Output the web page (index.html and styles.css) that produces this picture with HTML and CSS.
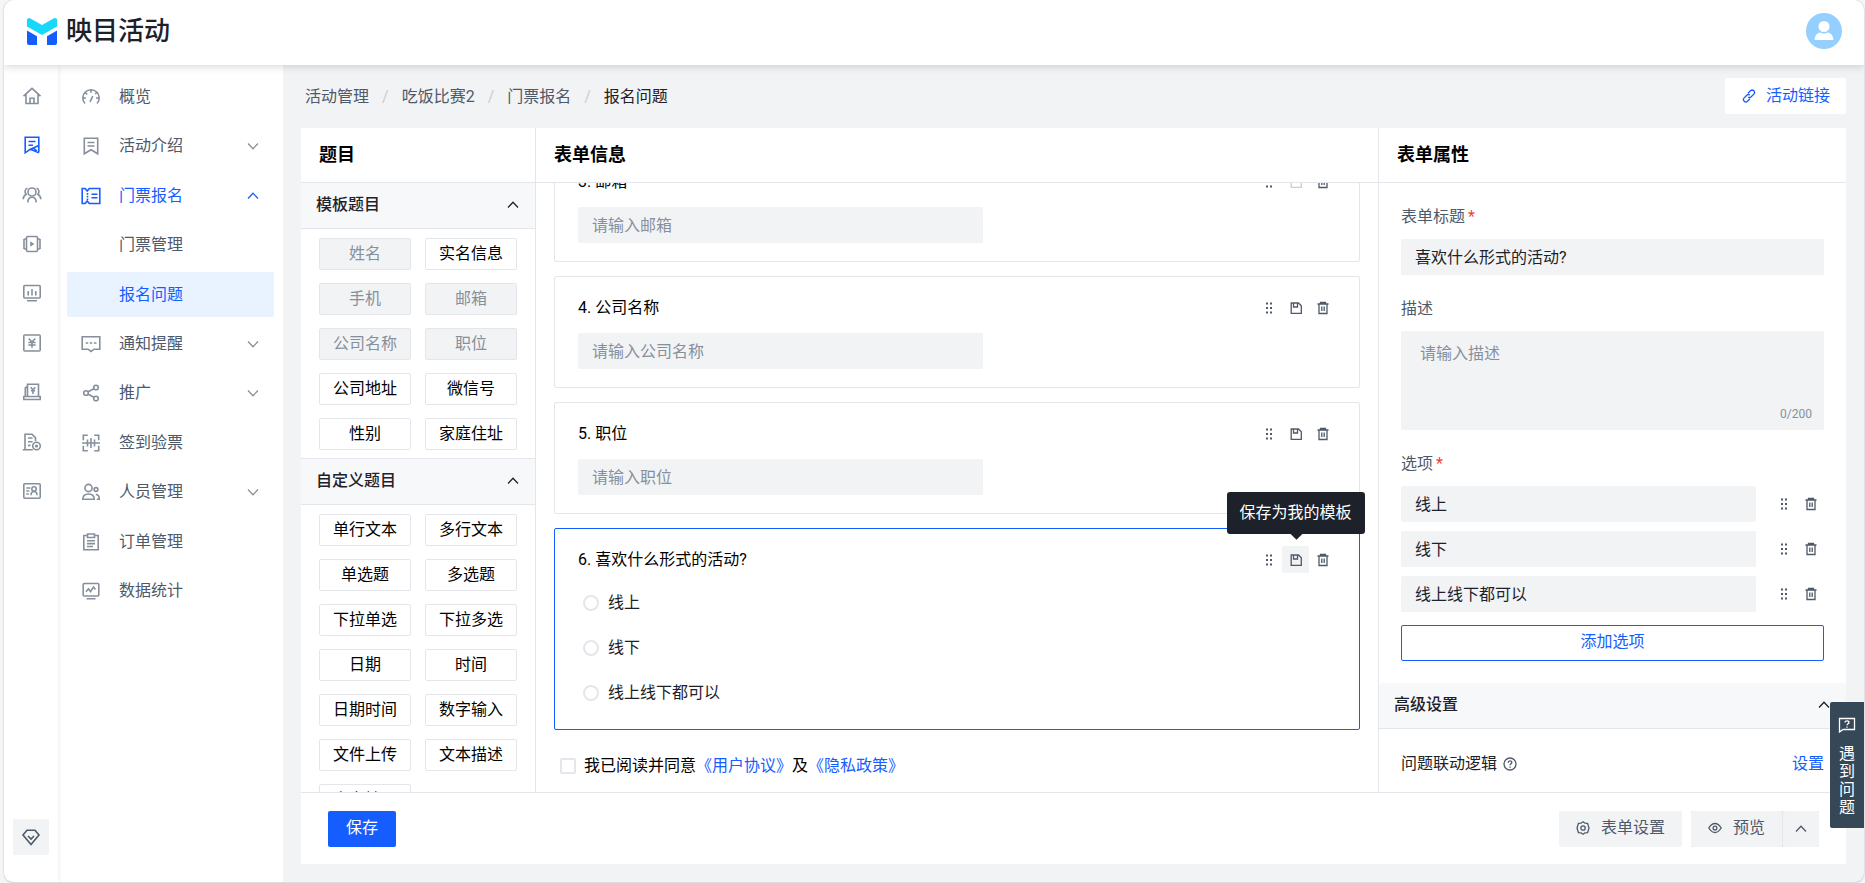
FILE: index.html
```html
<!DOCTYPE html>
<html lang="zh-CN">
<head>
<meta charset="utf-8">
<title>映目活动 - 报名问题</title>
<link rel="stylesheet" href="styles.css">
</head>
<body>
<svg class="sprite" aria-hidden="true">
  <symbol id="i-down" viewBox="0 0 14 14"><path d="M2 4.5 7 9.7l5-5.2"/></symbol>
  <symbol id="i-up" viewBox="0 0 14 14"><path d="M2 9.5 7 4.3l5 5.2"/></symbol>
  <symbol id="i-home" viewBox="0 0 20 20"><path d="M1.500 10.200 10 2.300l8.500 7.900M4 8.500V17.500h12V8.500M8 17.500v-5.300h4v5.300"/></symbol>
  <symbol id="i-flag" viewBox="0 0 20 20"><path d="M16.800 17.600V2.200H3.200v15.600l5.300-3.600M6.500 6.500h7M6.500 10.300h4.500M16.800 10.500 8.500 14.300l8.300 3.500M12 13.500l3 2.500"/></symbol>
  <symbol id="i-group" viewBox="0 0 20 20"><circle cx="10" cy="7" r="4"/><path d="M5.800 17.500c0-3 1.200-5.300 4.200-5.300s4.200 2.300 4.200 5.300M5.500 3.200C2.800 3.500 2.300 7.600 4.200 9.300 2.300 10.300 1.300 12 1.200 14.300M14.500 3.200c2.700.3 3.200 4.400 1.300 6.100 1.900 1 2.900 2.700 3 5"/></symbol>
  <symbol id="i-video" viewBox="0 0 20 20"><rect x="4.500" y="2.500" width="11" height="15" rx="1.500"/><path d="M4.500 4.500 2 5.500v9l2.500 1M15.500 4.500l2.500 1v9l-2.500 1"/><path class="solid" d="M8.200 7.200v5.600l4.200-2.800z"/></symbol>
  <symbol id="i-board" viewBox="0 0 20 20"><rect x="1.800" y="2.500" width="16.400" height="12.500" rx="1"/><path d="M5 17.800h10M6.200 8v4.500M10 6v6.500M13.800 8v4.500"/></symbol>
  <symbol id="i-yen" viewBox="0 0 20 20"><rect x="1.800" y="2" width="16.400" height="16" rx="1"/><path d="m6.800 5.500 3.200 3.500 3.200-3.500M10 9v5.800M6.300 9.500h7.400M6.300 12h7.400"/></symbol>
  <symbol id="i-cash" viewBox="0 0 20 20"><path d="M5.500 14V2.300h11V14M5.500 4.500 3.300 6v8M1.800 14.500h16.400v3H1.800zM8.800 5.200 11 8l2.200-2.800M11 8v4M9 8.800h4"/></symbol>
  <symbol id="i-report" viewBox="0 0 20 20"><path d="M.8 17.800h10M3 17.500V2.200h7l3.500 3.500V9M6 6h4.500M6 9.700h4.500M6 13.400h2.500"/><circle cx="14.500" cy="14" r="3.800"/><circle cx="14.500" cy="14" r=".8"/></symbol>
  <symbol id="i-card" viewBox="0 0 20 20"><rect x="1.800" y="2.800" width="16.400" height="14.400" rx="1"/><path d="M4.300 7h4M4.300 10h3M4.300 13h2.500M9 14.200c0-2.500 1.200-3.700 3-3.700s3 1.200 3 3.700"/><circle cx="12" cy="8" r="2.200"/></symbol>
  <symbol id="i-gauge" viewBox="0 0 20 20"><path d="M4 16.500a8.200 8.200 0 1 1 12 0M9 14.800l2.800-5.600M10 3v2.800M4.500 5.800l1.800 1.700M2.500 11H5M15 11h2.500M14.200 7l1.300-1.300"/></symbol>
  <symbol id="i-mark" viewBox="0 0 20 20"><path d="M3.300 2.200h13.400v15.600L10 13.800l-6.700 4zM6.500 6.500h7M6.500 10h7"/></symbol>
  <symbol id="i-ticket" viewBox="0 0 20 20"><path d="M1.200 2.500h2.900L6.200 5l2.100-2.500h10.500v15H8.300L6.200 15l-2.100 2.500H1.200zM10.500 8.200h6M10.500 11.800h6"/><path d="M6.500 7v7" stroke-dasharray="1.800 1"/></symbol>
  <symbol id="i-msg" viewBox="0 0 20 20"><path d="M1.200 2.800h17.600v12.400H13L10 17.500l-3-2.300H1.200z"/><path d="M4.700 9h10.800" stroke-dasharray="2.500 1.600"/></symbol>
  <symbol id="i-share" viewBox="0 0 20 20"><circle cx="5" cy="10" r="2.300"/><circle cx="15" cy="4.500" r="2.300"/><circle cx="15" cy="15.500" r="2.300"/><path d="m7.200 8.800 5.600-3M7.200 11.200l5.600 3"/></symbol>
  <symbol id="i-scan" viewBox="0 0 20 20"><path d="M2.300 7.300v-5h4.500M13.200 2.300h4.500v5M17.700 12.700v5h-4.500M6.800 17.700H2.300v-5M1 10h18M6.500 6.500v7M10 5v10M13.500 6.500v7"/></symbol>
  <symbol id="i-users" viewBox="0 0 20 20"><circle cx="7.500" cy="6" r="3.600"/><path d="M1.800 17.300c0-3.400 2-5.300 5.700-5.300s5.700 1.900 5.700 5.300z"/><circle cx="15" cy="7.500" r="1.900"/><path d="M14.800 12.500c2.300 0 3.500 1.800 3.500 4.700h-2.500"/></symbol>
  <symbol id="i-clip" viewBox="0 0 20 20"><path d="M6.500 3.500H2.800v14.300h14.400V3.500h-3.700M6.500 2h7v3.500h-7zM6 8.800h8M6 11.600h8M6 14.500h6"/></symbol>
  <symbol id="i-stat" viewBox="0 0 20 20"><rect x="2.200" y="2.500" width="15.600" height="12.500" rx="1"/><path d="M5.500 17.700h9M5 10.800l2.500-3 2 2.700 3-4.500 2 2.500"/></symbol>
  <symbol id="i-gem" viewBox="0 0 20 20"><path d="M6 3.200h8L18 8l-8 9.500L2 8zM7 9l3 3 3-3"/></symbol>
  <symbol id="i-drag" viewBox="0 0 14 14"><path class="solid" d="M4 1.500h2v2H4zM8 1.500h2v2H8zM4 6h2v2H4zM8 6h2v2H8zM4 10.500h2v2H4zM8 10.500h2v2H8z"/></symbol>
  <symbol id="i-save" viewBox="0 0 14 14"><path d="M2.200 2h7.300l2.800 2.800V12.300H2.200zM4.500 2v4h4V2"/></symbol>
  <symbol id="i-trash" viewBox="0 0 14 14"><path d="M1.500 3h11M4.500 3V1.500h5V3M3 3v9.500h8V3M5.800 5.500v4.500M8.200 5.500v4.500"/></symbol>
  <symbol id="i-link" viewBox="0 0 14 14"><path d="M6 4.300 8.500 1.800a2.300 2.300 0 0 1 3.300 3.300L9.200 7.700a2.200 2.200 0 0 1-3 .2M8 9.700l-2.500 2.500a2.300 2.300 0 0 1-3.300-3.300l2.600-2.600a2.200 2.200 0 0 1 3-.2"/></symbol>
  <symbol id="i-gear" viewBox="0 0 14 14"><path d="M7 .8 9 2.200l2.600.1.700 2.500L13 7l-.7 2.200-.7 2.500-2.600.1L7 13.200l-2-1.400-2.600-.1-.7-2.500L1 7l.7-2.200.7-2.500L5 2.200z"/><circle cx="7" cy="7" r="2.200"/></symbol>
  <symbol id="i-eye" viewBox="0 0 14 14"><path d="M.8 7C2.500 4.200 4.500 2.500 7 2.500S11.500 4.200 13.200 7C11.500 9.800 9.500 11.500 7 11.500S2.500 9.800.8 7z"/><circle cx="7" cy="7" r="1.900"/></symbol>
  <symbol id="i-help" viewBox="0 0 14 14"><circle cx="7" cy="7" r="6"/><path d="M5.200 5.700C5.200 3.400 8.800 3.400 8.800 5.500 8.800 6.700 7 6.900 7 8.300M7 9.500v1.200"/></symbol>
</svg>

<div class="app">
  <header class="topbar">
    <a class="brand" href="#">
      <svg class="brand-mark" viewBox="0 0 30 27"><path fill="#17d8fb" d="M0 1.500Q0 0 2.500 0L15 7 27.500 0Q30 0 30 1.500V8.500L15 17 0 8.500z"/><path fill="#165dff" d="M0 12.500 10 18.200V27H2a2 2 0 0 1-2-2zM30 12.500 20 18.200V27h8a2 2 0 0 0 2-2z"/></svg>
      <span>映目活动</span>
    </a>
    <button class="avatar" aria-label="个人中心"><svg viewBox="0 0 36 36"><circle cx="18" cy="13.500" r="5.500"/><path d="M8.500 27c.5-5 3-7 5.500-7.500 2.500 1.300 5.500 1.300 8 0 2.500.5 5 2.500 5.500 7.500z"/></svg></button>
  </header>

  <div class="body">
    <nav class="rail" aria-label="主导航">
      <div class="rail-items">
        <a href="#" aria-label="首页"><svg class="i20"><use href="#i-home"/></svg></a>
        <a href="#" class="on" aria-label="活动"><svg class="i20"><use href="#i-flag"/></svg></a>
        <a href="#" aria-label="用户"><svg class="i20"><use href="#i-group"/></svg></a>
        <a href="#" aria-label="视频"><svg class="i20"><use href="#i-video"/></svg></a>
        <a href="#" aria-label="数据"><svg class="i20"><use href="#i-board"/></svg></a>
        <a href="#" aria-label="财务"><svg class="i20"><use href="#i-yen"/></svg></a>
        <a href="#" aria-label="收款"><svg class="i20"><use href="#i-cash"/></svg></a>
        <a href="#" aria-label="设置"><svg class="i20"><use href="#i-report"/></svg></a>
        <a href="#" aria-label="名片"><svg class="i20"><use href="#i-card"/></svg></a>
      </div>
      <button class="gem" aria-label="会员"><svg class="i20"><use href="#i-gem"/></svg></button>
    </nav>

    <nav class="menu" aria-label="活动菜单">
      <div class="menu-items">
        <a href="#"><svg class="i20"><use href="#i-gauge"/></svg><span>概览</span></a>
        <a href="#"><svg class="i20"><use href="#i-mark"/></svg><span>活动介绍</span><svg class="i14"><use href="#i-down"/></svg></a>
        <a href="#" class="on"><svg class="i20"><use href="#i-ticket"/></svg><span>门票报名</span><svg class="i14"><use href="#i-up"/></svg></a>
        <a href="#" class="sub"><span>门票管理</span></a>
        <a href="#" class="sub current"><span>报名问题</span></a>
        <a href="#"><svg class="i20"><use href="#i-msg"/></svg><span>通知提醒</span><svg class="i14"><use href="#i-down"/></svg></a>
        <a href="#"><svg class="i20"><use href="#i-share"/></svg><span>推广</span><svg class="i14"><use href="#i-down"/></svg></a>
        <a href="#"><svg class="i20"><use href="#i-scan"/></svg><span>签到验票</span></a>
        <a href="#"><svg class="i20"><use href="#i-users"/></svg><span>人员管理</span><svg class="i14"><use href="#i-down"/></svg></a>
        <a href="#"><svg class="i20"><use href="#i-clip"/></svg><span>订单管理</span></a>
        <a href="#"><svg class="i20"><use href="#i-stat"/></svg><span>数据统计</span></a>
      </div>
    </nav>

    <main class="main">
      <div class="crumb-bar">
        <nav class="crumbs" aria-label="路径"><a href="#">活动管理</a><i>/</i><a href="#">吃饭比赛2</a><i>/</i><a href="#">门票报名</a><i>/</i><span>报名问题</span></nav>
        <button class="link-btn"><svg class="i14"><use href="#i-link"/></svg>活动链接</button>
      </div>

      <div class="panel">
        <section class="col">
          <h2>题目</h2>
          <div class="col-body">
            <h3>模板题目<svg class="i14"><use href="#i-up"/></svg></h3>
            <div class="chips">
              <button disabled>姓名</button><button>实名信息</button>
              <button disabled>手机</button><button disabled>邮箱</button>
              <button disabled>公司名称</button><button disabled>职位</button>
              <button>公司地址</button><button>微信号</button>
              <button>性别</button><button>家庭住址</button>
            </div>
            <h3 class="ruled">自定义题目<svg class="i14"><use href="#i-up"/></svg></h3>
            <div class="chips">
              <button>单行文本</button><button>多行文本</button>
              <button>单选题</button><button>多选题</button>
              <button>下拉单选</button><button>下拉多选</button>
              <button>日期</button><button>时间</button>
              <button>日期时间</button><button>数字输入</button>
              <button>文件上传</button><button>文本描述</button>
              <button>省市地区</button>
            </div>
          </div>
        </section>

        <section class="col">
          <h2>表单信息</h2>
          <div class="col-body questions">
            <article class="card">
              <div class="card-head"><label for="q3">3. 邮箱</label>
                <div class="acts"><button aria-label="拖动"><svg class="i14"><use href="#i-drag"/></svg></button><button disabled aria-label="保存为模板"><svg class="i14"><use href="#i-save"/></svg></button><button aria-label="删除"><svg class="i14"><use href="#i-trash"/></svg></button></div></div>
              <input class="field" id="q3" placeholder="请输入邮箱">
            </article>
            <article class="card">
              <div class="card-head"><label for="q4">4. 公司名称</label>
                <div class="acts"><button aria-label="拖动"><svg class="i14"><use href="#i-drag"/></svg></button><button aria-label="保存为模板"><svg class="i14"><use href="#i-save"/></svg></button><button aria-label="删除"><svg class="i14"><use href="#i-trash"/></svg></button></div></div>
              <input class="field" id="q4" placeholder="请输入公司名称">
            </article>
            <article class="card">
              <div class="card-head"><label for="q5">5. 职位</label>
                <div class="acts"><button aria-label="拖动"><svg class="i14"><use href="#i-drag"/></svg></button><button aria-label="保存为模板"><svg class="i14"><use href="#i-save"/></svg></button><button aria-label="删除"><svg class="i14"><use href="#i-trash"/></svg></button></div></div>
              <input class="field" id="q5" placeholder="请输入职位">
            </article>
            <article class="card selected">
              <div class="card-head"><span>6. 喜欢什么形式的活动?</span>
                <div class="acts"><button aria-label="拖动"><svg class="i14"><use href="#i-drag"/></svg></button><button class="hover" aria-describedby="tip"><svg class="i14"><use href="#i-save"/></svg><span class="tip" id="tip" role="tooltip">保存为我的模板</span></button><button aria-label="删除"><svg class="i14"><use href="#i-trash"/></svg></button></div></div>
              <div class="choices">
                <label><input type="radio" name="q6">线上</label>
                <label><input type="radio" name="q6">线下</label>
                <label><input type="radio" name="q6">线上线下都可以</label>
              </div>
            </article>
            <div class="consent">
              <input type="checkbox" id="agree"><label for="agree">我已阅读并同意</label><a href="#">《用户协议》</a>及<a href="#">《隐私政策》</a>
            </div>
          </div>
        </section>

        <section class="col props">
          <h2>表单属性</h2>
          <div class="col-body">
            <div class="form">
              <label class="cap" for="title">表单标题<b>*</b></label>
              <input class="field" id="title" value="喜欢什么形式的活动?">
              <label class="cap" for="desc">描述</label>
              <div class="area"><textarea id="desc" placeholder="请输入描述"></textarea><span>0/200</span></div>
              <span class="cap">选项<b>*</b></span>
              <div class="options">
                <div class="option"><input class="field" aria-label="选项1" value="线上"><div class="acts"><button aria-label="拖动"><svg class="i14"><use href="#i-drag"/></svg></button><button aria-label="删除"><svg class="i14"><use href="#i-trash"/></svg></button></div></div>
                <div class="option"><input class="field" aria-label="选项2" value="线下"><div class="acts"><button aria-label="拖动"><svg class="i14"><use href="#i-drag"/></svg></button><button aria-label="删除"><svg class="i14"><use href="#i-trash"/></svg></button></div></div>
                <div class="option"><input class="field" aria-label="选项3" value="线上线下都可以"><div class="acts"><button aria-label="拖动"><svg class="i14"><use href="#i-drag"/></svg></button><button aria-label="删除"><svg class="i14"><use href="#i-trash"/></svg></button></div></div>
              </div>
              <button class="add">添加选项</button>
            </div>
            <h3>高级设置<svg class="i14"><use href="#i-up"/></svg></h3>
            <div class="logic"><span>问题联动逻辑</span><svg class="i14"><use href="#i-help"/></svg><a href="#">设置</a></div>
          </div>
        </section>

        <footer class="foot">
          <button class="primary">保存</button>
          <div class="foot-right">
            <button class="grey"><svg class="i14"><use href="#i-gear"/></svg>表单设置</button>
            <div class="split">
              <button class="grey"><svg class="i14"><use href="#i-eye"/></svg>预览</button>
              <button class="grey more" aria-label="更多"><svg class="i14"><use href="#i-up"/></svg></button>
            </div>
          </div>
        </footer>
      </div>
    </main>
  </div>
  <button class="float"><svg viewBox="0 0 18 16"><path d="M1.500 1.500h15v11H5L1.500 15zM7 5.500C7 3.300 11 3.300 11 5.500 11 6.800 9 6.800 9 8.300M9 9.500v1.300"/></svg><span>遇到问题</span></button>
</div>
</body>
</html>
```

FILE: styles.css
```css
:root {
  --blue: #165dff;
  --ink: #1d2129;
  --text: #4e5969;
  --mute: #86909c;
  --line: #e5e6eb;
  --fill: #f2f3f5;
  --head: #f7f8fa;
}
* { box-sizing: border-box; }
body {
  margin: 0;
  background: #f5f5f5;
  color: var(--ink);
  font: 400 16px/24px Roboto, "Noto Sans CJK SC", sans-serif;
}
button, input, textarea { font: inherit; color: inherit; }
button { border: 0; padding: 0; background: none; border-radius: 2px; cursor: pointer; }
a { color: inherit; text-decoration: none; }
h2, h3 { margin: 0; }
svg { fill: none; stroke: currentColor; stroke-width: 1.3; flex: none; display: block; }
.solid { fill: currentColor; stroke: none; }
.sprite { position: absolute; width: 0; height: 0; }
.i20 { width: 20px; height: 20px; stroke-width: 1.6; }
.i14 { width: 14px; height: 14px; }

.app {
  position: relative;
  display: flex;
  flex-direction: column;
  height: 100vh;
  margin: 0 1px 0 4px;
  border-bottom: 1px solid #dcdcdc;
  border-radius: 10px;
  background: var(--fill);
  overflow: hidden;
  box-shadow: 0 0 2px rgba(0, 0, 0, .25);
}
.topbar {
  position: relative;
  z-index: 2;
  display: flex;
  align-items: center;
  justify-content: space-between;
  flex: none;
  height: 65px;
  padding: 0 22px 3px 23px;
  background: #fff;
  box-shadow: 0 2px 8px rgba(0, 0, 0, .15);
}
.brand { display: flex; align-items: center; gap: 9px; font-size: 26px; font-weight: 500; line-height: 36px; }
.brand-mark { width: 30px; height: 27px; stroke: none; }
.avatar { width: 36px; height: 36px; border-radius: 50%; background: #94cfff; overflow: hidden; }
.avatar svg { fill: #fff; stroke: none; }

.body { display: flex; flex: 1; min-height: 0; }
.rail {
  position: relative;
  z-index: 1;
  display: flex;
  flex-direction: column;
  justify-content: space-between;
  width: 54px;
  padding: 6px 0 27px;
  background: #fff;
  color: var(--mute);
  box-shadow: 0 0 5px rgba(0, 0, 0, .1);
}
.rail-items { display: grid; grid-auto-rows: 1fr; height: 445px; padding-left: 2px; }
.rail-items a { display: grid; place-items: center; }
.rail .on { color: var(--blue); }
.gem { display: grid; place-items: center; width: 36px; height: 36px; margin: 0 auto; background: var(--fill); color: var(--text); }
.menu { width: 225px; padding: 7px 9px; background: #fff; color: var(--text); }
.menu-items { display: grid; grid-auto-rows: 1fr; height: 544px; }
.menu-items a { display: flex; align-items: center; margin: 2px 0; padding: 0 14px; border-radius: 2px; }
.menu-items .i20 { margin-right: 18px; color: var(--mute); }
.menu-items .i14 { margin-left: auto; color: var(--mute); }
.menu-items .on, .menu-items .on svg { color: var(--blue); }
.menu-items .sub { padding-left: 52px; }
.menu-items .current { background: #e8f3ff; color: var(--blue); }

.main { display: flex; flex-direction: column; flex: 1; min-width: 0; padding: 13px 18px 18px; }
.crumb-bar { display: flex; align-items: center; justify-content: space-between; height: 36px; padding-left: 4px; margin-bottom: 14px; }
.crumbs { display: flex; gap: 13px; padding-top: 2px; color: var(--text); }
.crumbs i { font-style: normal; color: #c9cdd4; }
.crumbs span { color: var(--ink); }
.link-btn { display: flex; align-items: center; gap: 10px; height: 36px; padding: 0 16px 0 17px; background: #fff; color: var(--blue); }

.panel {
  display: grid;
  grid-template: minmax(0, 1fr) 72px / 235px minmax(0, 1fr) 468px;
  flex: 1;
  min-height: 0;
  background: #fff;
}
.col { display: flex; flex-direction: column; min-width: 0; min-height: 0; }
.col:first-child { border-right: 1px solid var(--line); }
.props { border-left: 1px solid var(--line); }
h2 { flex: none; padding: 15px 18px; border-bottom: 1px solid var(--line); font-size: 18px; line-height: 24px; font-weight: 700; color: #000; }
.col-body { flex: 1; min-height: 0; overflow: hidden; }
h3 {
  display: flex;
  align-items: center;
  justify-content: space-between;
  height: 46px;
  padding: 0 15px 2px;
  background: var(--head);
  border-bottom: 1px solid var(--line);
  font-size: 16px;
  font-weight: 500;
}
h3.ruled { height: 47px; border-top: 1px solid var(--line); }
.chips { display: grid; grid-template-columns: 1fr 1fr; gap: 13px 14px; padding: 9px 18px 8px; }
.chips button { height: 32px; border: 1px solid var(--line); background: #fff; color: #000; }
.chips button:disabled { background: var(--fill); color: var(--mute); }

.questions { display: flex; flex-direction: column; justify-content: flex-end; gap: 14px; padding: 0 18px 14px; }
.card { flex: none; padding: 17px 23px 18px; border: 1px solid var(--line); border-radius: 2px; color: #000; }
.card.selected { border-color: var(--blue); padding-bottom: 20px; }
.card-head { display: flex; justify-content: space-between; align-items: center; height: 27px; margin-bottom: 12px; }
.acts { display: flex; color: var(--text); }
.acts button { position: relative; display: grid; place-items: center; width: 27px; height: 27px; }
.acts button:disabled { color: #c9cdd4; }
.acts .hover { background: var(--fill); }
.tip {
  position: absolute;
  left: 50%;
  bottom: 39px;
  transform: translateX(-50%);
  padding: 9px 13px;
  border-radius: 3px;
  background: var(--ink);
  color: #fff;
  white-space: nowrap;
}
.tip::after {
  content: "";
  position: absolute;
  left: 50%;
  bottom: -4px;
  width: 9px;
  height: 9px;
  margin-left: -4px;
  background: var(--ink);
  transform: rotate(45deg);
}
.field { display: block; width: 100%; height: 36px; padding: 0 14px; border: 0; border-radius: 2px; background: var(--fill); color: var(--ink); }
.card .field { max-width: 405px; }
.props .field { padding-bottom: 3px; }
::placeholder { color: var(--mute); opacity: 1; }
.choices { display: grid; gap: 13px; padding-top: 2px; color: var(--ink); }
.choices label { display: flex; align-items: center; gap: 9px; height: 32px; padding-left: 5px; }
input[type="radio"], input[type="checkbox"] { appearance: none; flex: none; width: 16px; height: 16px; margin: 0; border: 2px solid var(--line); background: #fff; }
input[type="radio"] { border-radius: 50%; }
input[type="checkbox"] { border-radius: 2px; margin-right: 8px; }
.consent { display: flex; align-items: center; flex: none; height: 24px; margin-top: 10px; padding-left: 6px; color: #000; }
.consent a, .logic a { color: var(--blue); }

.form { display: flex; flex-direction: column; padding: 22px; }
.cap { display: block; margin-bottom: 10px; color: var(--text); }
.cap b { margin-left: 3px; color: #f53f3f; font-weight: 400; }
.form > .field { margin-bottom: 22px; }
.area { position: relative; height: 99px; margin-bottom: 22px; border-radius: 2px; background: var(--fill); }
.area textarea { display: block; width: 100%; height: 100%; padding: 11px 19px; border: 0; background: none; resize: none; }
.area span { position: absolute; right: 12px; bottom: 6px; font-size: 12px; line-height: 20px; color: var(--mute); }
.options { display: grid; gap: 9px; margin-bottom: 13px; }
.option { display: flex; align-items: center; justify-content: space-between; }
.option .field { flex: 1; margin-right: 14px; }
.add { height: 36px; padding-bottom: 2px; border: 1px solid var(--blue); color: var(--blue); }
.props h3 { border-radius: 4px 4px 0 0; }
.logic { display: flex; align-items: center; gap: 6px; padding: 23px 22px; }
.logic svg { color: var(--text); }
.logic a { margin-left: auto; }

.foot { grid-column: 1 / -1; display: flex; align-items: center; justify-content: space-between; padding: 0 27px; border-top: 1px solid var(--line); }
.primary { height: 36px; padding: 0 18px 2px; background: var(--blue); color: #fff; }
.foot-right, .split { display: flex; }
.foot-right { gap: 9px; }
.split { gap: 1px; background: var(--line); }
.grey { display: flex; align-items: center; gap: 11px; height: 36px; padding: 0 17px 2px; background: var(--fill); color: var(--text); }
.more { padding: 0 11px; }

.float {
  position: absolute;
  z-index: 3;
  right: 0;
  top: 702px;
  display: flex;
  flex-direction: column;
  align-items: center;
  gap: 12px;
  width: 34px;
  height: 126px;
  padding-top: 15px;
  border-radius: 2px 0 0 2px;
  background: #364858;
  color: #fff;
}
.float svg { width: 18px; height: 16px; }
.float span { width: 16px; font-size: 16px; line-height: 18px; }
```
